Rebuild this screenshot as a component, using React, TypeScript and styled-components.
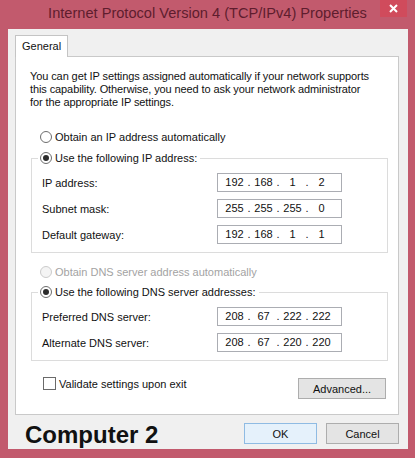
import styled, { createGlobalStyle } from 'styled-components';
import { Fragment } from 'react';

const GlobalStyle = createGlobalStyle`
    body {
        margin: 0;
        font-family: "Liberation Sans", Arial, sans-serif;
        color: #111;
    }
    * { box-sizing: border-box; }
`;

const Window = styled.div`
    width: 415px;
    height: 458px;
    background: #c25a6d;
    display: flex;
    flex-direction: column;
`;

const TitleBar = styled.div`
    height: 29px;
    display: grid;
    grid-template-columns: 1fr auto 1fr;
    align-items: start;
`;

const Title = styled.div`
    grid-column: 2;
    font-size: 14.6px;
    line-height: 27px;
    color: #5e1d2e;
    white-space: nowrap;
`;

const CloseButton = styled.div`
    grid-column: 3;
    justify-self: end;
    width: 27px;
    height: 17px;
    margin-right: 8px;
    background: #d04b5c;
    display: flex;
    align-items: center;
    justify-content: center;
`;

const Client = styled.div`
    flex: 1;
    margin: 0 7px 9px 8px;
    background: #f0f0f0;
    padding: 6px 9px 0 7px;
    display: flex;
    flex-direction: column;
`;

const Tab = styled.div`
    align-self: flex-start;
    position: relative;
    z-index: 1;
    width: 53px;
    height: 22px;
    margin-bottom: -1px;
    padding-left: 6px;
    background: #fff;
    border: 1px solid #c4c4c4;
    border-bottom: none;
    font-size: 11px;
    line-height: 20px;
`;

const Panel = styled.div`
    height: 359px;
    background: #fff;
    border: 1px solid #c9c9c9;
    padding: 13px 12px 0 14px;
    display: flex;
    flex-direction: column;
`;

const Intro = styled.p`
    margin: 0;
    font-size: 11px;
    line-height: 13px;
    letter-spacing: -0.1px;
`;

const RadioRow = styled.label<{ $top?: number; $disabled?: boolean }>`
    display: flex;
    align-items: center;
    gap: 3px;
    height: 14px;
    margin-top: ${p => p.$top ?? 0}px;
    padding-left: ${p => (p.$top === undefined ? 0 : 10)}px;
    font-size: 11px;
    color: ${p => (p.$disabled ? '#a3a3a3' : '#111')};
`;

const RadioCircle = styled.span<{ $checked?: boolean; $disabled?: boolean }>`
    width: 12px;
    height: 12px;
    border-radius: 50%;
    border: 1px solid ${p => (p.$disabled ? '#cbcbcb' : '#6d6d6d')};
    background: ${p => (p.$disabled ? '#f4f4f4' : '#fff')};
    display: flex;
    align-items: center;
    justify-content: center;

    &::after {
        content: '';
        width: 6px;
        height: 6px;
        border-radius: 50%;
        background: ${p => (p.$checked ? '#2b2b2b' : 'transparent')};
    }
`;

const Group = styled.fieldset<{ $top: number }>`
    width: 357px;
    margin: ${p => p.$top}px 0 0 1px;
    padding: 8px 0 8px 10px;
    border: 1px solid #dcdcdc;
    min-width: 0;
`;

const Legend = styled.legend`
    margin-left: -4px;
    padding: 0 3px 0 2px;
`;

const Fields = styled.div`
    display: flex;
    flex-direction: column;
    gap: 7px;
`;

const FieldRow = styled.div`
    display: grid;
    grid-template-columns: 175px 125px;
    align-items: center;
    height: 19px;
    font-size: 11px;
`;

const IpBox = styled.div`
    height: 19px;
    border: 1px solid #abadb3;
    background: #fff;
    display: flex;
    padding-left: 5px;
    font-size: 11px;
    line-height: 17px;
`;

const Octet = styled.span`
    width: 23px;
    text-align: center;
`;

const Dot = styled.span`
    width: 6px;
    text-align: center;
`;

const FooterRow = styled.div`
    display: flex;
    justify-content: space-between;
    align-items: flex-start;
    margin-top: 16px;
    padding-left: 13px;
`;

const CheckLabel = styled.label`
    display: flex;
    align-items: center;
    gap: 3px;
    height: 13px;
    font-size: 11px;
`;

const CheckBox = styled.span`
    width: 13px;
    height: 13px;
    border: 1px solid #6a6a6a;
    background: #fff;
`;

const Button = styled.button<{ $default?: boolean; $width: number }>`
    width: ${p => p.$width}px;
    height: 21px;
    padding: 0;
    font-family: "Liberation Sans", Arial, sans-serif;
    font-size: 11px;
    color: #111;
    background: ${p => (p.$default ? '#e5f1fb' : '#e4e4e4')};
    border: 1px solid ${p => (p.$default ? '#8fbbe3' : '#adadad')};
`;

const AdvancedButton = styled(Button)`
    margin-top: 1px;
`;

const BottomRow = styled.div`
    display: flex;
    align-items: flex-start;
    gap: 9px;
    margin-top: 8px;
`;

const Caption = styled.div`
    margin-left: 10px;
    margin-right: auto;
    font-size: 24px;
    font-weight: 700;
    line-height: 24px;
    color: #111;
`;

type Field = { label: string; octets: string[] };

const ipFields: Field[] = [
    { label: 'IP address:', octets: ['192', '168', '1', '2'] },
    { label: 'Subnet mask:', octets: ['255', '255', '255', '0'] },
    { label: 'Default gateway:', octets: ['192', '168', '1', '1'] },
];

const dnsFields: Field[] = [
    { label: 'Preferred DNS server:', octets: ['208', '67', '222', '222'] },
    { label: 'Alternate DNS server:', octets: ['208', '67', '220', '220'] },
];

function IpInput({ octets }: { octets: string[] }) {
    return (
        <IpBox>
            {octets.map((o, i) => (
                <Fragment key={i}>
                    {i > 0 && <Dot>.</Dot>}
                    <Octet>{o}</Octet>
                </Fragment>
            ))}
        </IpBox>
    );
}

function FieldList({ fields }: { fields: Field[] }) {
    return (
        <Fields>
            {fields.map(f => (
                <FieldRow key={f.label}>
                    <span>{f.label}</span>
                    <IpInput octets={f.octets} />
                </FieldRow>
            ))}
        </Fields>
    );
}

export default function App() {
    return (
        <>
            <GlobalStyle />
            <Window>
                <TitleBar>
                    <Title>Internet Protocol Version 4 (TCP/IPv4) Properties</Title>
                    <CloseButton>
                        <svg width="9" height="9" viewBox="0 0 9 9">
                            <path d="M1 1 L8 8 M8 1 L1 8" stroke="#fff" strokeWidth="2" />
                        </svg>
                    </CloseButton>
                </TitleBar>
                <Client>
                    <Tab>General</Tab>
                    <Panel>
                        <Intro>
                            You can get IP settings assigned automatically if your network supports<br />
                            this capability. Otherwise, you need to ask your network administrator<br />
                            for the appropriate IP settings.
                        </Intro>

                        <RadioRow $top={21}>
                            <RadioCircle />
                            Obtain an IP address automatically
                        </RadioRow>
                        <Group $top={7}>
                            <Legend>
                                <RadioRow>
                                    <RadioCircle $checked />
                                    Use the following IP address:
                                </RadioRow>
                            </Legend>
                            <FieldList fields={ipFields} />
                        </Group>

                        <RadioRow $top={12} $disabled>
                            <RadioCircle $disabled />
                            Obtain DNS server address automatically
                        </RadioRow>
                        <Group $top={6}>
                            <Legend>
                                <RadioRow>
                                    <RadioCircle $checked />
                                    Use the following DNS server addresses:
                                </RadioRow>
                            </Legend>
                            <FieldList fields={dnsFields} />
                        </Group>

                        <FooterRow>
                            <CheckLabel>
                                <CheckBox />
                                Validate settings upon exit
                            </CheckLabel>
                            <AdvancedButton $width={88}>Advanced...</AdvancedButton>
                        </FooterRow>
                    </Panel>
                    <BottomRow>
                        <Caption>Computer 2</Caption>
                        <Button $default $width={73}>OK</Button>
                        <Button $width={73}>Cancel</Button>
                    </BottomRow>
                </Client>
            </Window>
        </>
    );
}
